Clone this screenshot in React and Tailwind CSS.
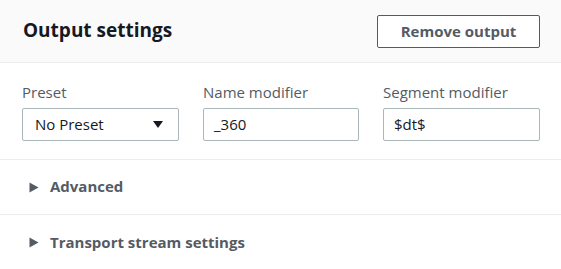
import React from "react";

function Tri({ className }) {
  return (
    <svg width="10" height="11" viewBox="0 0 10 11" className={className}>
      <polygon points="0.5,0.5 9.5,5.5 0.5,10.5" fill="currentColor" />
    </svg>
  );
}

export default function App() {
  const font = { fontFamily: '"Open Sans", "Noto Sans", Arial, sans-serif' };
  return (
    <div className="w-[561px] h-[269px] bg-white text-[#16191f] overflow-hidden" style={font}>
      <div className="h-[63px] bg-[#fafafa] border-b border-[#eaeded] flex items-center justify-between pl-[23px] pr-[21px]">
        <div className="text-[19px] font-bold leading-none text-[#16191f] -mt-[1px]">Output settings</div>
        <button className="w-[163px] h-[33px] border border-[#545b64] bg-white rounded-[2px] text-[15px] font-bold text-[#545b64] flex items-center justify-center">
          Remove output
        </button>
      </div>
      <div className="h-[97px] border-b border-[#eaeded] flex gap-[24px] pl-[22px] pt-[20px]">
        <div className="flex flex-col w-[157px]">
          <div className="text-[15px] text-[#545b64] leading-[18px] mb-[7px]">Preset</div>
          <div className="h-[33px] border border-[#aab7b8] rounded-[2px] flex items-center justify-between pl-[12px] pr-[15px] text-[15px] text-[#16191f]">
            <span>No Preset</span>
            <svg width="10" height="8" viewBox="0 0 10 8"><polygon points="0,0 10,0 5,7" fill="#16191f" /></svg>
          </div>
        </div>
        <div className="flex flex-col w-[156px]">
          <div className="text-[15px] text-[#545b64] leading-[18px] mb-[7px]">Name modifier</div>
          <div className="h-[33px] border border-[#aab7b8] rounded-[2px] flex items-center pl-[10px] text-[15px] text-[#16191f]">_360</div>
        </div>
        <div className="flex flex-col w-[157px]">
          <div className="text-[15px] text-[#545b64] leading-[18px] mb-[7px]">Segment modifier</div>
          <div className="h-[33px] border border-[#aab7b8] rounded-[2px] flex items-center pl-[10px] text-[15px] text-[#16191f]">$dt$</div>
        </div>
      </div>
      <div className="h-[55px] border-b border-[#eaeded] flex items-center pl-[29px] gap-[11px] text-[#545b64]">
        <Tri className="text-[#545b64]" />
        <span className="text-[15px] font-bold -mt-[1px]">Advanced</span>
      </div>
      <div className="h-[55px] flex items-center pl-[29px] gap-[11px] text-[#545b64]">
        <Tri className="text-[#545b64]" />
        <span className="text-[15px] font-bold -mt-[1px]">Transport stream settings</span>
      </div>
    </div>
  );
}
